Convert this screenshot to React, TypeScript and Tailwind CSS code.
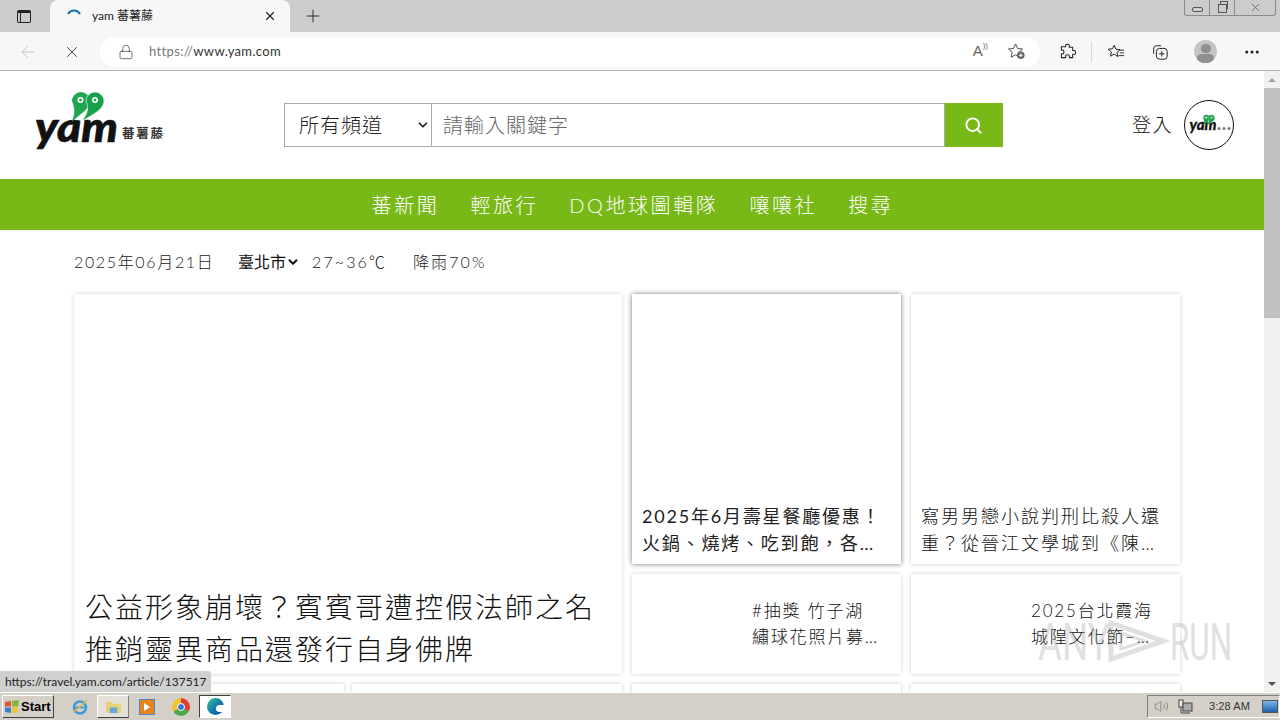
import React from 'react';
import { ArrowLeft, X, Plus, Lock, Search, ChevronDown, Ellipsis, Volume2 } from 'lucide-react';

const cjk = "font-['Lato','Noto_Sans_CJK_TC',sans-serif]";

function YamHearts({ x = 0, y = 0, s = 1 }: { x?: number; y?: number; s?: number }) {
  return (
    <g transform={`translate(${x} ${y}) scale(${s})`}>
      <path d="M2 11a9 9 0 0 1 18 0c0 8-9 12-18 21 2-7 4-11 0-21z" fill="#1fa750" />
      <path d="M16 11a9 9 0 0 1 18 0c0 8-10 13-22 20 4-6 8-12 4-20z" fill="#19a04a" stroke="#fff" strokeWidth="0.6" />
      <circle cx="10.500" cy="10" r="3" fill="#fff" />
      <circle cx="10.500" cy="10" r="1.400" fill="#1fa750" />
      <circle cx="25" cy="10" r="3" fill="#fff" />
      <circle cx="25" cy="10" r="1.400" fill="#1fa750" />
    </g>
  );
}

function YamLogo() {
  return (
    <svg viewBox="0 0 135 64" className="w-[135px] h-[64px]">
      <g transform="translate(0 52) scale(1 0.82)">
        <text x="2" y="0" fontFamily="Lato" fontWeight="900" fontStyle="italic" fontSize="52" fill="#111" stroke="#111" strokeWidth="0.8" textLength="83" lengthAdjust="spacingAndGlyphs">yam</text>
      </g>
      <YamHearts x={37} y={0} />
      <text x="89" y="48" fontFamily="Noto Sans CJK TC" fontWeight="700" fontSize="12.500" fill="#333" textLength="41" lengthAdjust="spacing">蕃薯藤</text>
    </svg>
  );
}

function AvatarLogo() {
  return (
    <svg viewBox="0 0 50 50" className="w-[50px] h-[50px]">
      <circle cx="25" cy="25" r="24.500" fill="#fff" stroke="#111" strokeWidth="1" />
      <text x="5.500" y="30" fontFamily="Lato" fontWeight="900" fontStyle="italic" fontSize="15" fill="#111" stroke="#111" strokeWidth="0.3" textLength="27" lengthAdjust="spacingAndGlyphs">yam</text>
      <circle cx="35" cy="28.500" r="1.500" fill="#777" />
      <circle cx="40" cy="28.500" r="1.500" fill="#777" />
      <circle cx="45" cy="28.500" r="1.500" fill="#777" />
      <YamHearts x={18.500} y={14} s={0.36} />
    </svg>
  );
}

function TabBar() {
  return (
    <div className="h-8 bg-[#cccccc] flex items-end relative shrink-0">
      <div className="w-[50px] h-8 flex items-center justify-center pr-[2px]">
        <div className="w-[14px] h-[13px] border-[1.5px] border-[#222] rounded-[2px] border-t-[3px] relative">
          <div className="w-px h-full bg-[#222] ml-[2px]" />
        </div>
      </div>
      <div className="w-[240px] h-8 bg-[#f7f7f7] rounded-t-lg flex items-center pl-[17px] pr-[13px]">
        <svg viewBox="0 0 14 8" className="w-[14px] h-2 mr-[11px] mb-[8px]">
          <path d="M1 6a7 7 0 0 1 12 0" fill="none" stroke="#1a6ea8" strokeWidth="2" />
        </svg>
        <span className={`text-[12px] text-[#222] flex-1 ${cjk}`}>yam 蕃薯藤</span>
        <X size={14} strokeWidth={2} className="text-[#222]" />
      </div>
      <div className="w-[46px] h-8 flex items-center justify-center">
        <Plus size={20} strokeWidth={1.1} className="text-[#222]" />
      </div>
      <div className="absolute right-[4px] top-0 h-4 w-[92px] flex border border-t-0 border-[#8a8a8a] rounded-b-[3px] text-[#555]">
        <div className="w-[25px] flex items-center justify-center border-r border-[#8a8a8a]">
          <div className="w-[11px] h-[5px] border border-[#555] rounded-[2px] mt-[3px]" />
        </div>
        <div className="w-[25px] flex items-center justify-center border-r border-[#8a8a8a]">
          <div className="w-[9px] h-[9px] relative mt-[2px]">
            <div className="absolute left-[2px] top-[-3px] w-[8px] h-[8px] border border-[#555]" />
            <div className="absolute inset-0 bg-[#cccccc] border border-[#555]" />
          </div>
        </div>
        <div className="flex-1 flex items-center justify-center">
          <X size={13} strokeWidth={1.4} />
        </div>
      </div>
    </div>
  );
}

function ToolBar() {
  return (
    <div className="h-[39px] pt-px bg-[#f7f7f7] border-b border-[#b5b5b5] flex items-center shrink-0">
      <div className="w-[56px] flex justify-center">
        <ArrowLeft size={20} strokeWidth={1} className="text-[#bdbdbd]" />
      </div>
      <div className="w-[32px] flex justify-center">
        <X size={18} strokeWidth={1.1} className="text-[#222]" />
      </div>
      <div className="ml-[12px] w-[940px] h-[30px] bg-white rounded-full flex items-center pl-[18px] pr-[14px]">
        <Lock size={16} strokeWidth={1} className="text-[#333]" />
        <span className="ml-[15px] text-[13px] text-[#333] font-['Lato',sans-serif] tracking-[0.35px] flex-1">
          <span className="text-[#777]">https://</span>www.yam.com
        </span>
        <span className="text-[#666] text-[15px] font-['Liberation_Sans',sans-serif] mr-[19px]">A<span className="text-[8px] align-top">))</span></span>
        <svg viewBox="0 0 20 20" className="w-[19px] h-[19px]">
          <path d="M9 2l2.200 4.800 5.200.6-3.900 3.500 1 5.100L9 13.400 4.500 16l1-5.100-3.900-3.500 5.200-.6z" fill="none" stroke="#444" strokeWidth="1" />
          <circle cx="14.500" cy="14" r="4" fill="#666" />
          <path d="M14.500 12v4M12.500 14h4" stroke="#fff" strokeWidth="1" />
        </svg>
      </div>
      <div className="ml-[15px] w-[24px] flex justify-center">
        <svg viewBox="0 0 18 18" className="w-[17px] h-[17px]">
          <path d="M7 2.500c0-1.500 4-1.500 4 0 0 1-.5 1.500 0 2h3.500v3.500c.5.500 1 0 2 0 1.500 0 1.500 4 0 4-1 0-1.500-.5-2 0v3.500H11c-.5-.5 0-1 0-2 0-1.500-4-1.500-4 0 0 1 .5 1.500 0 2H2.500v-4c.5-.5 1.500.5 2 0 1-1 1-3 0-4-.5-.5-1.500.5-2 0v-3.500H7c.5-.5 0-1 0-2z" fill="none" stroke="#222" strokeWidth="1.100" />
        </svg>
      </div>
      <div className="ml-[12px] w-px h-5 bg-[#d8d8d8]" />
      <div className="ml-[12px] w-[24px] flex justify-center">
        <svg viewBox="0 0 20 20" className="w-[18px] h-[18px]">
          <path d="M8 2.500l1.900 4.400 4.700.5-3.500 3.100 1 4.700L8 12.300 3.900 14.700l1-4.700-3.500-3.100 4.700-.5z" fill="none" stroke="#222" strokeWidth="1.100" />
          <path d="M14 8h5M14 11h5M13 14h6" stroke="#222" strokeWidth="1" />
        </svg>
      </div>
      <div className="ml-[20px] w-[24px] flex justify-center">
        <svg viewBox="0 0 20 20" className="w-[18px] h-[18px]">
          <path d="M3 12V5.500A3 3 0 0 1 6 3h5" fill="none" stroke="#222" strokeWidth="1.100" />
          <rect x="6" y="6" width="12" height="12" rx="3.500" fill="none" stroke="#222" strokeWidth="1.100" />
          <path d="M12 9v6M9 12h6" stroke="#222" strokeWidth="1.100" />
        </svg>
      </div>
      <div className="ml-[22px] w-[23px] h-[23px] rounded-full bg-[#c4c4c4] overflow-hidden flex flex-col items-center">
        <div className="w-[10px] h-[10px] rounded-full bg-[#8f8f8f] mt-[4px]" />
        <div className="w-[17px] h-[10px] rounded-full bg-[#8f8f8f] mt-[1px]" />
      </div>
      <div className="ml-[26px] text-[#222]">
        <Ellipsis size={18} strokeWidth={2} />
      </div>
    </div>
  );
}

function Header() {
  return (
    <div className="h-[108px] flex items-center shrink-0">
      <div className="w-[284px] pl-[33px] h-full pt-[19px]">
        <YamLogo />
      </div>
      <div className="flex h-11">
        <div className={`w-[148px] border border-[#a9a9a9] flex items-center pl-[14px] pr-[1px] text-[20px] text-[#222] font-light tracking-[1px] ${cjk}`}>
          <span className="flex-1">所有頻道</span>
          <ChevronDown size={14} strokeWidth={3} className="text-[#222]" />
        </div>
        <div className={`w-[513px] border border-l-0 border-[#a9a9a9] flex items-center pl-[11px] text-[20px] text-[#666] font-light tracking-[1px] ${cjk}`}>請輸入關鍵字</div>
        <div className="w-[58px] bg-[#78b917] flex items-center justify-center pr-[1px]">
          <Search size={19} strokeWidth={2.4} className="text-white" />
        </div>
      </div>
      <div className={`ml-[129px] text-[19px] text-[#111] font-light tracking-[1.500px] ${cjk}`}>登入</div>
      <div className="ml-[11px] w-[50px] h-[50px]">
        <AvatarLogo />
      </div>
    </div>
  );
}

function NavBar() {
  const items = ['蕃新聞', '輕旅行', 'DQ地球圖輯隊', '嚷嚷社', '搜尋'];
  return (
    <div className={`h-[51px] bg-[#78b917] flex items-center justify-center gap-[31px] text-[20px] text-white font-light tracking-[2.600px] shrink-0 pl-[1px] ${cjk}`}>
      {items.map((t) => <span key={t}>{t}</span>)}
    </div>
  );
}

function WeatherRow() {
  return (
    <div className={`h-[64px] flex items-center pl-[74px] text-[16px] text-[#222] font-light tracking-[2.100px] shrink-0 ${cjk}`}>
      <span className="w-[164px] tracking-[1.650px]">2025年06月21日</span>
      <span className="text-[#111] font-normal tracking-[0px] flex items-center w-[74px]">臺北市<ChevronDown size={14} strokeWidth={3.5} /></span>
      <span className="w-[101px]">27~36℃</span>
      <span>降雨70%</span>
    </div>
  );
}

function Card({ className, children }: { className: string; children?: React.ReactNode }) {
  return <div className={`bg-white shadow-[0_0_4px_rgba(0,0,0,0.2)] ${className}`}>{children}</div>;
}

function TallText({ lines, strong }: { lines: string[]; strong?: boolean }) {
  return (
    <div className={`mt-auto px-[10px] pb-[7px] text-[18px] leading-[27px] whitespace-nowrap ${strong ? 'text-[#222] tracking-[1.800px]' : 'text-[#111] font-light tracking-[2px]'} ${cjk}`}>
      {lines.map((l) => <div key={l}>{l}</div>)}
    </div>
  );
}

function SmallCard({ lines }: { lines: string[] }) {
  return (
    <Card className="w-[269px] h-[100px] flex items-center pl-[120px]">
      <div className={`text-[17px] leading-[26px] tracking-[1.800px] text-[#111] font-light whitespace-nowrap ${cjk}`}>
        {lines.map((l) => <div key={l}>{l}</div>)}
      </div>
    </Card>
  );
}

function Content() {
  return (
    <div className="pl-[74px] flex flex-col gap-[10px]">
      <div className="flex gap-[10px]">
        <Card className="w-[548px] h-[380px] flex flex-col justify-end px-[11px] pb-[4px]">
          <div className={`text-[28px] leading-[42px] tracking-[2px] text-[#111] font-light whitespace-nowrap ${cjk}`}>
            <div>公益形象崩壞？賓賓哥遭控假法師之名</div>
            <div>推銷靈異商品還發行自身佛牌</div>
          </div>
        </Card>
        <div className="flex flex-col gap-[10px]">
          <div className="flex gap-[10px]">
            <Card className="w-[269px] h-[270px] flex flex-col shadow-[0_0_5px_rgba(0,0,0,0.55)]">
              <TallText strong lines={['2025年6月壽星餐廳優惠！', '火鍋、燒烤、吃到飽，各…']} />
            </Card>
            <Card className="w-[269px] h-[270px] flex flex-col">
              <TallText lines={['寫男男戀小說判刑比殺人還', '重？從晉江文學城到《陳…']} />
            </Card>
          </div>
          <div className="flex gap-[10px]">
            <SmallCard lines={['#抽獎 竹子湖', '繡球花照片募…']} />
            <SmallCard lines={['2025台北霞海', '城隍文化節–…']} />
          </div>
        </div>
      </div>
      <div className="flex gap-[10px]">
        <div className="flex gap-2">
          <Card className="w-[270px] h-[100px]" />
          <Card className="w-[270px] h-[100px]" />
        </div>
        <Card className="w-[269px] h-[100px]" />
        <Card className="w-[269px] h-[100px]" />
      </div>
    </div>
  );
}

function Scrollbar() {
  return (
    <div className="w-4 bg-[#f1f1f1] flex flex-col items-center shrink-0">
      <div className="h-[17px] flex items-center justify-center">
        <div className="w-0 h-0 border-x-[4px] border-x-transparent border-b-[4px] border-b-[#a0a0a0]" />
      </div>
      <div className="w-full h-[230px] bg-[#c1c1c1]" />
      <div className="mt-auto h-[17px] flex items-center justify-center">
        <div className="w-0 h-0 border-x-[4px] border-x-transparent border-t-[4px] border-t-[#505050]" />
      </div>
    </div>
  );
}

function Taskbar() {
  return (
    <div className="h-7 bg-[#d4d0c8] border-t border-white flex items-center relative shrink-0 font-['Liberation_Sans',sans-serif]">
      <div className="ml-[2px] w-[52px] h-[23px] border border-t-white border-l-white border-r-[#404040] border-b-[#404040] flex items-center pl-[1px] gap-[1px]">
        <svg viewBox="0 0 16 16" className="w-[16px] h-[16px]">
          <path d="M1 3l6-1v5.500H1z" fill="#e2572b" />
          <path d="M8 2l7-1-1 6.500H8z" fill="#7fb83a" />
          <path d="M1 8.500h6V14l-6-1z" fill="#3a7fd0" />
          <path d="M8 8.500h6l-1 6-5-1z" fill="#f2c22e" />
        </svg>
        <span className="text-[13px] font-bold text-black leading-none">Start</span>
      </div>
      <div className="ml-[16px] w-[20px] flex justify-center">
        <svg viewBox="0 0 18 18" className="w-[18px] h-[18px]">
          <circle cx="9" cy="9.500" r="6" fill="none" stroke="#3f9ad8" strokeWidth="2.500" />
          <path d="M4 9.500h10" stroke="#3f9ad8" strokeWidth="1.800" />
          <path d="M2 14c3-1 10-8 14-12" fill="none" stroke="#e8b93a" strokeWidth="1.300" />
        </svg>
      </div>
      <div className="ml-[7px] w-[32px] h-[23px] border border-t-white border-l-white border-r-[#808080] border-b-[#404040] bg-[#e4e1da] flex items-center justify-center">
        <svg viewBox="0 0 18 16" className="w-[17px] h-[15px]">
          <path d="M1 3h6l1 2h9v10H1z" fill="#e9cf76" />
          <path d="M5 9h8v6H5z" fill="#62a8d8" />
        </svg>
      </div>
      <div className="ml-[8px] w-[20px] flex justify-center">
        <div className="w-[16px] h-[16px] border border-[#4d86c9] bg-[#e8841c] flex items-center justify-center">
          <div className="w-0 h-0 border-y-[4px] border-y-transparent border-l-[6px] border-l-white" />
        </div>
      </div>
      <div className="ml-[14px] w-[20px] flex justify-center">
        <div className="w-[18px] h-[18px] rounded-full bg-[conic-gradient(#e0402f_0_33%,#4ca84a_33%_66%,#f3c42f_66%_100%)] flex items-center justify-center">
          <div className="w-[8px] h-[8px] rounded-full bg-[#3a78d8] border border-white" />
        </div>
      </div>
      <div className="ml-[8px] w-[32px] h-[23px] bg-white border border-t-[#404040] border-l-[#404040] border-r-white border-b-white flex items-center justify-center">
        <div className="w-[17px] h-[17px] rounded-full bg-[linear-gradient(135deg,#37c78b,#0f6fb5_60%,#0a4f8f)] flex items-center justify-end">
          <div className="w-[8px] h-[7px] rounded-l-full bg-white mt-[3px]" />
        </div>
      </div>
      <div className="ml-auto w-[133px] h-[23px] border border-t-[#808080] border-l-[#808080] border-r-white border-b-white flex items-center pl-[6px] text-[#333]">
        <Volume2 size={15} strokeWidth={1.3} className="text-[#777]" />
        <svg viewBox="0 0 16 16" className="w-[16px] h-[16px] ml-[9px]">
          <rect x="1" y="1" width="4" height="7" fill="#eee" stroke="#444" />
          <rect x="5" y="4" width="9" height="8" fill="#aaa" stroke="#444" />
          <path d="M3 8v6h9" fill="none" stroke="#444" />
        </svg>
        <span className="text-[11px] ml-[15px] tracking-[0.1px]">3:28 AM</span>
        <div className="ml-auto mr-[1px] w-[16px] h-[13px] bg-[linear-gradient(#7db6e8,#1d5fae)] border border-[#555]" />
      </div>
    </div>
  );
}

function Watermark() {
  return (
    <svg viewBox="0 0 196 62" className="absolute left-[1037px] top-[612px] w-[196px] h-[62px] opacity-30 pointer-events-none">
      <text x="1" y="48" fontFamily="Roboto" fontSize="52" fill="#9a9a9a" textLength="72" lengthAdjust="spacingAndGlyphs">ANY</text>
      <path d="M74 11l52 18-52 18z" fill="none" stroke="#9a9a9a" strokeWidth="5" />
      <path d="M84 21l24 8-24 8z" fill="none" stroke="#9a9a9a" strokeWidth="3" />
      <text x="133" y="48" fontFamily="Roboto" fontSize="52" fill="#9a9a9a" textLength="62" lengthAdjust="spacingAndGlyphs">RUN</text>
    </svg>
  );
}

export default function App() {
  return (
    <div className="w-[1280px] h-[720px] overflow-hidden flex flex-col bg-white relative">
      <TabBar />
      <ToolBar />
      <div className="flex-1 flex min-h-0">
        <div className="flex-1 min-w-0 overflow-hidden flex flex-col">
          <Header />
          <NavBar />
          <WeatherRow />
          <Content />
        </div>
        <Scrollbar />
      </div>
      <Taskbar />
      <div className="absolute left-0 bottom-[28px] h-[21px] w-[211px] bg-[#d0d0d0] rounded-tr-[3px] flex items-center pl-[5px] text-[12px] text-[#222] font-['Lato',sans-serif]">
        https://travel.yam.com/article/137517
      </div>
      <Watermark />
    </div>
  );
}
